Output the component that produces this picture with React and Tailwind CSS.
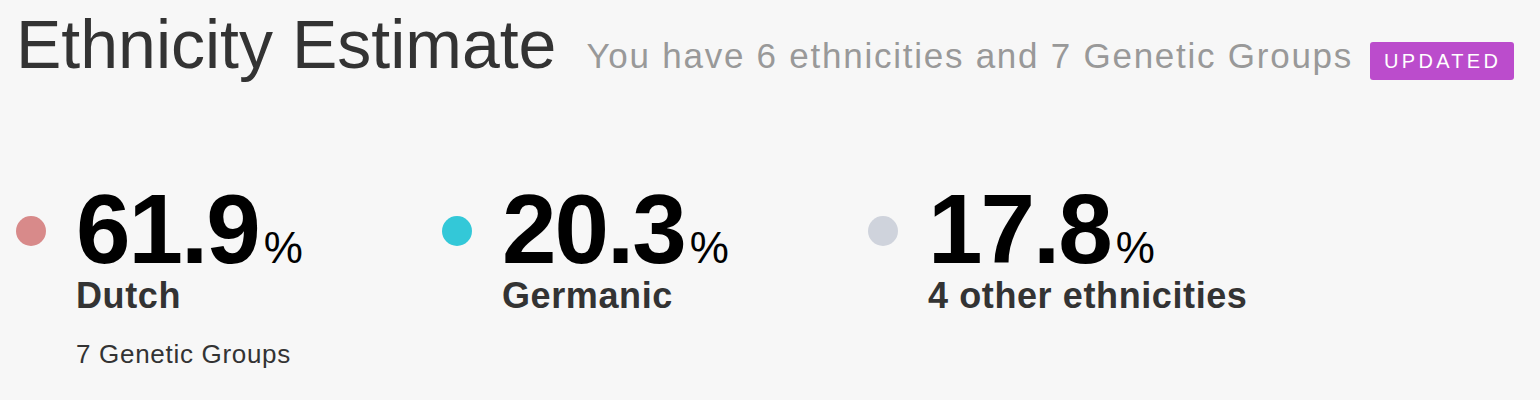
const GROUPS = [
  { pct: "61.9", name: "Dutch", dot: "bg-[#d88a8a]", sub: "7 Genetic Groups" },
  { pct: "20.3", name: "Germanic", dot: "bg-[#33c8d8]" },
  { pct: "17.8", name: "4 other ethnicities", dot: "bg-[#cfd3dc]" },
];

export default function App() {
  return (
    <div className="min-h-screen bg-[#f7f7f7] font-['Liberation_Sans',Arial,sans-serif] px-4">
      {/* Header */}
      <div className="flex items-baseline pt-[10px]">
        <h1 className="text-[68px] leading-none text-[#333] font-normal">
          Ethnicity Estimate
        </h1>
        <p className="ml-[30px] text-[35px] leading-none tracking-[1.75px] text-[#999]">
          You have 6 ethnicities and 7 Genetic Groups
        </p>
        <span className="ml-[17px] rounded-[3px] bg-[#bb4ccc] pl-[14px] pr-[13px] text-[20px] leading-[38px] tracking-[3.3px] text-white">
          UPDATED
        </span>
      </div>

      {/* Breakdown */}
      <div className="flex pt-[100px]">
        {GROUPS.map((g) => (
          <div key={g.name} className="flex w-[426px] gap-[30px]">
            <span className={`mt-[36px] h-[30px] w-[30px] shrink-0 rounded-full ${g.dot}`} />
            <div className="flex flex-col">
              <div className="flex items-baseline text-black">
                <span className="text-[98px] font-bold leading-none tracking-[-2px]">{g.pct}</span>
                <span className="ml-[5px] text-[44px] leading-none">%</span>
              </div>
              <span className="text-[36px] font-bold leading-none tracking-[0.6px] text-[#333]">{g.name}</span>
              {g.sub && (
                <span className="mt-[27px] text-[26px] leading-none tracking-[0.7px] text-[#333]">
                  {g.sub}
                </span>
              )}
            </div>
          </div>
        ))}
      </div>
    </div>
  );
}
